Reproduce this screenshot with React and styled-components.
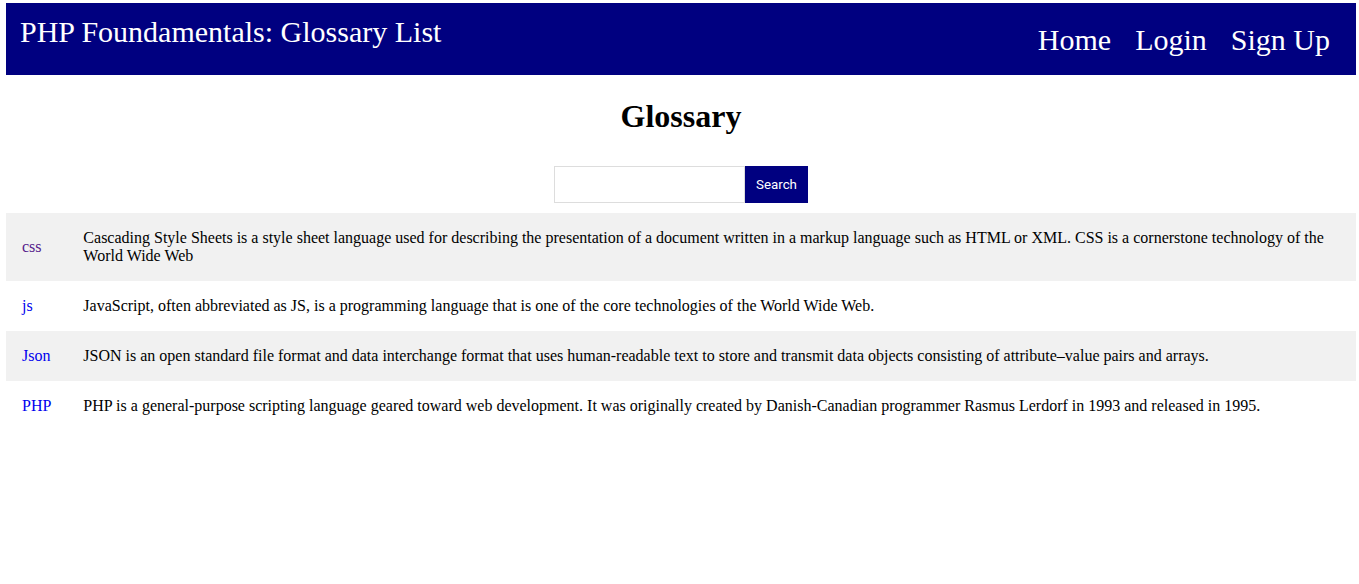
import React from "react"
import styled, { createGlobalStyle } from "styled-components"

const GlobalStyle = createGlobalStyle`
  body {
    margin: 3px 3px 0 6px;
    font-family: "Liberation Serif", "Times New Roman", serif;
    background: white;
  }
`

const Header = styled.header`
  display: flex;
  justify-content: space-between;
  align-items: flex-start;
  background-color: #000080;
  color: white;
  padding: 12px 26px 18px 14px;
`

const Title = styled.div`
  font-size: 30px;
`

const Nav = styled.nav`
  display: flex;
  gap: 24px;
  padding-top: 8px;
`

const NavLink = styled.a`
  color: white;
  text-decoration: none;
  font-size: 30px;
`

const Heading = styled.h1`
  text-align: center;
  font-size: 32px;
  margin: 23px 0 31px;
`

const SearchForm = styled.form`
  display: flex;
  justify-content: center;
  margin-bottom: 10px;
`

const SearchInput = styled.input`
  box-sizing: border-box;
  width: 191px;
  height: 37px;
  border: 1px solid #ddd;
  outline: none;
  padding: 0 8px;
`

const SearchButton = styled.button`
  box-sizing: border-box;
  height: 37px;
  padding: 0 11px;
  border: none;
  background-color: #000080;
  color: white;
  font-family: Roboto, "Liberation Sans", sans-serif;
  font-size: 13.33px;
`

const Table = styled.table`
  width: 100%;
  border-collapse: collapse;
`

const Row = styled.tr`
  background-color: ${(p) => (p.$shaded ? "#f1f1f1" : "white")};
`

const Cell = styled.td`
  padding: 16px;
  font-size: 16px;
  line-height: 18px;
  vertical-align: middle;
`

const TermLink = styled.a`
  color: ${(p) => (p.$visited ? "#551a8b" : "#0000ee")};
  text-decoration: none;
`

const terms = [
  {
    name: "css",
    visited: true,
    text: "Cascading Style Sheets is a style sheet language used for describing the presentation of a document written in a markup language such as HTML or XML. CSS is a cornerstone technology of the World Wide Web",
  },
  {
    name: "js",
    text: "JavaScript, often abbreviated as JS, is a programming language that is one of the core technologies of the World Wide Web.",
  },
  {
    name: "Json",
    text: "JSON is an open standard file format and data interchange format that uses human-readable text to store and transmit data objects consisting of attribute–value pairs and arrays.",
  },
  {
    name: "PHP",
    text: "PHP is a general-purpose scripting language geared toward web development. It was originally created by Danish-Canadian programmer Rasmus Lerdorf in 1993 and released in 1995.",
  },
]

const App = () => {
  return (
    <>
      <GlobalStyle />
      <Header>
        <Title>PHP Foundamentals: Glossary List</Title>
        <Nav>
          <NavLink href="#">Home</NavLink>
          <NavLink href="#">Login</NavLink>
          <NavLink href="#">Sign Up</NavLink>
        </Nav>
      </Header>
      <Heading>Glossary</Heading>
      <SearchForm onSubmit={(e) => e.preventDefault()}>
        <SearchInput type="text" />
        <SearchButton type="submit">Search</SearchButton>
      </SearchForm>
      <Table>
        <tbody>
          {terms.map((t, i) => (
            <Row key={t.name} $shaded={i % 2 === 0}>
              <Cell>
                <TermLink href="#" $visited={t.visited}>
                  {t.name}
                </TermLink>
              </Cell>
              <Cell>{t.text}</Cell>
            </Row>
          ))}
        </tbody>
      </Table>
    </>
  )
}

export default App
